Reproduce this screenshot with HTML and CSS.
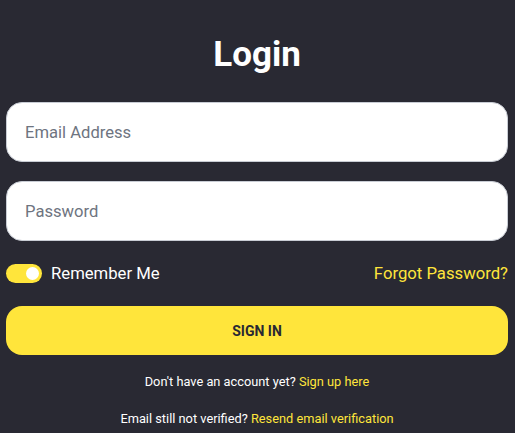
FILE: index.html
```
<!DOCTYPE html>
<html lang="en">
<head>
    <meta charset="UTF-8">
    <meta name="viewport" content="width=device-width, initial-scale=1.0">
    <title>Login</title>
    <link rel="stylesheet" href="styles.css">
</head>
<body>
    <div class="container">
        <h1>Login</h1>
        <form class="login-form">
            <input type="email" class="field" placeholder="Email Address">
            <input type="password" class="field" placeholder="Password">
            <div class="options">
                <label class="remember">
                    <span class="toggle"><span class="knob"></span></span>
                    Remember Me
                </label>
                <a href="#" class="link forgot">Forgot Password?</a>
            </div>
            <button type="button" class="signin">Sign In</button>
        </form>
        <p class="note">Don't have an account yet? <a href="#" class="link">Sign up here</a></p>
        <p class="note">Email still not verified? <a href="#" class="link">Resend email verification</a></p>
    </div>
</body>
</html>
```
FILE: styles.css
```
body { margin: 0; background: #292933; font-family: Roboto, "Liberation Sans", sans-serif; color: #fff; }
.container { padding: 0 7px 0 6px; }
h1 { font-size: 35px; line-height: 42px; margin: 34px 0 26px; text-align: center; font-weight: 700; }
.login-form { display: flex; flex-direction: column; }
.field { height: 60px; box-sizing: border-box; border: 1px solid #c8ccd4; border-radius: 16px; padding: 0 18px; font-family: inherit; font-size: 16.6px; margin-bottom: 19px; outline: none; }
.field::placeholder { color: #6e7480; }
.options { display: flex; justify-content: space-between; align-items: center; height: 20px; margin: 3px 0 23px; font-size: 16.7px; }
.remember { display: flex; align-items: center; gap: 9px; }
.toggle { width: 36px; height: 19px; border-radius: 10px; background: #ffe53b; position: relative; }
.knob { position: absolute; right: 3px; top: 3px; width: 13px; height: 13px; border-radius: 50%; background: #fff; }
.link { color: #ffe53b; text-decoration: none; }
.signin { height: 49px; border: none; border-radius: 16px; background: #ffe53b; color: #292933; font-family: inherit; font-weight: 700; font-size: 14px; text-transform: uppercase; cursor: pointer; }
.note { text-align: center; font-size: 12.8px; line-height: 20px; margin: 17px 0 0; }
```
